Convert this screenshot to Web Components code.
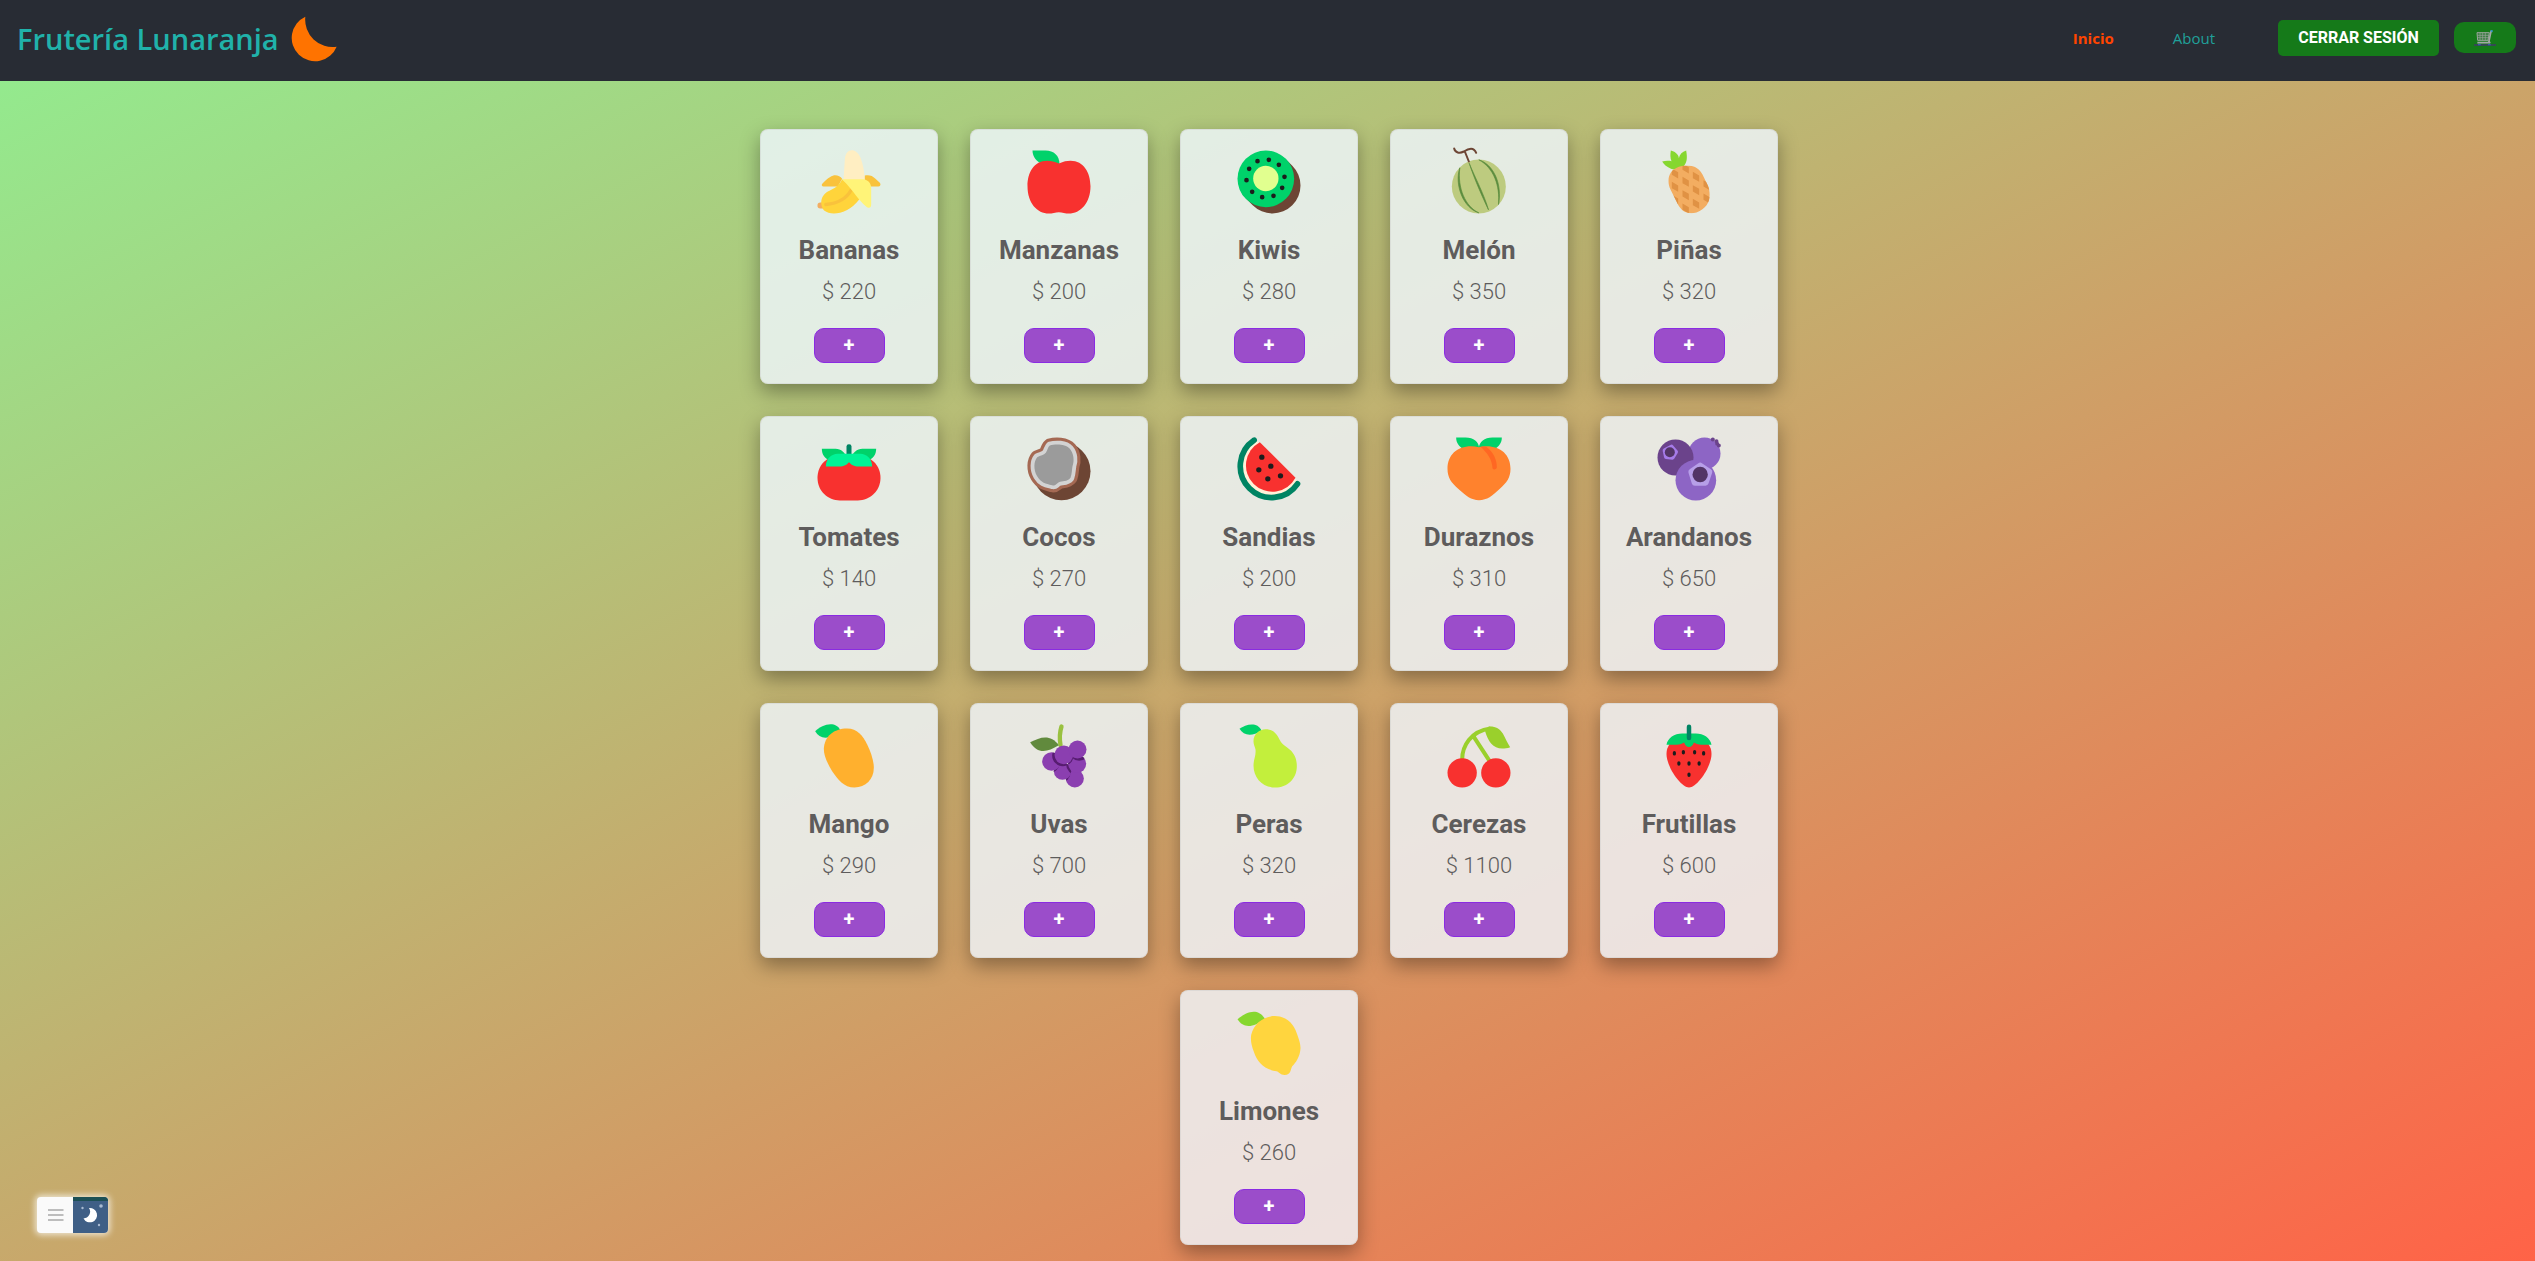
<!DOCTYPE html>
<html lang="es">
<head>
<meta charset="utf-8">
<meta name="viewport" content="width=device-width, initial-scale=1">
<title>Frutería Lunaranja</title>
<style>
html { min-height: 100%; background: linear-gradient(to bottom right, #90ee90, #ff6347); }
body { margin: 0; font-family: Roboto, sans-serif; }
</style>
</head>
<body>
<fruit-shop></fruit-shop>
<script>
const ICONS = {
  banana: ['187.5 79.5', `<rect x="201" y="249" width="26" height="18" rx="8" fill="#f3ad61"/><path d="M279 182L283 120C285 84 318 84 330 115C338 135 342 160 343 182Z" fill="#ffeec2"/><path d="M275 178L262 201H219C214 201 212 196 216 192C232 174 246 167 254 167C263 167 270 171 275 178ZM343 168C355 165 366 168 374 177L388 190C392 196 389 201 384 201H358L343 181Z" fill="#f9c23c"/><path d="M275 179C262 205 245 208 232 216C205 232 210 262 222 274C240 288 290 288 328 238L304 205Z" fill="#ffd43b"/><path d="M226 255C260 252 288 238 303 210" fill="none" stroke="#f9c23c" stroke-width="10" stroke-linecap="round"/><path d="M275 179H338C353 180 362 192 362 205V256C362 266 354 267 346 260C325 243 310 215 275 179Z" fill="#fff478"/>`],
  apple: ['817.5 79.5', `<path d="M846 93H885C910 93 927 108 927 135H880C858 128 846 112 846 93Z" fill="#00d26a"/><path d="M925 132C940 126 948 124 960 124C1000 124 1020 160 1020 200C1020 250 990 282 955 282C945 282 935 279 925 278C915 279 905 282 895 282C860 282 831 250 831 200C831 160 850 124 890 124C903 124 912 127 925 132Z" fill="#f8312f"/>`],
  kiwi: ['217.5 79.5', `<path d="M318 180L336 198" stroke="#6d4534" stroke-width="168" stroke-linecap="round"/><circle cx="316" cy="178" r="85" fill="#00d26a"/><circle cx="316" cy="177" r="38" fill="#e1ff8f"/><path d="M291 125h0M325 121h0M355 136h0M372 172h0M365 205h0M339 229h0M305 233h0M275 217h0M258 182h0M266 148h0" stroke="#1c1c1c" stroke-width="14" stroke-linecap="round"/>`],
  melon: ['847.5 79.5', `<circle cx="955" cy="201" r="81" fill="#bdcb7f"/><path d="M898 145C881 195 908 266 955 280C915 262 890 205 898 145ZM926 131C944 175 971 225 984 271C967 235 942 180 926 131ZM955 121C1000 135 1026 195 1014 255C1019 200 1000 145 955 121Z" fill="#5b8c3e" stroke="#5b8c3e" stroke-width="2"/><path d="M881 87C884 100 897 103 910 96C925 86 940 82 947 100M913 96L925 126" fill="none" stroke="#6d4534" stroke-width="6" stroke-linecap="round" stroke-linejoin="round"/>`],
  pineapple: ['247.5 79.5', `<path d="M301 93C320 98 325 110 325 116C328 104 335 97 347 93C351 115 350 130 338 142C325 153 310 152 300 147C288 142 280 135 275 126C285 123 295 123 303 125C299 115 299 105 301 93Z" fill="#86d72f"/><clipPath id="c"><path d="M350 138C375 138 388 150 396 165L412 198C425 230 417 265 378 279C350 286 332 275 321 252L300 210C288 185 292 154 325 142Q338 138 350 138Z"/></clipPath><g clip-path="url(#c)"><path d="M280 130h150v160h-150z" fill="#f3ad61"/><path d="M304 147l19 11v19l-19-11zM304 187l19 11v19l-19-11zM304 226l19 11v19l-19-11zM336 132l19 11v19l-19-11zM336 172l19 11v19l-19-11zM336 212l19 11v19l-19-11zM336 252l19 11v19l-19-11zM367 157l19 11v19l-19-11zM367 197l19 11v19l-19-11zM367 238l19 11v19l-19-11zM399 182l19 11v19l-19-11zM399 222l19 11v19l-19-11z" fill="#e09244"/></g>`],
  tomato: ['187.5 70.5', `<path d="M201 205C201 165 230 140 265 140H325C360 140 390 165 390 205C390 245 358 273 322 273H268C232 273 201 245 201 205Z" fill="#f8312f"/><path d="M214 118H255C272 118 285 130 288 145L240 155C222 147 214 135 214 118ZM377 118H336C319 118 306 130 303 145L351 155C369 147 377 135 377 118Z" fill="#00d26a"/><rect x="288" y="104" width="15" height="40" rx="7" fill="#008463"/><path d="M226 171C226 148 243 133 262 133H329C348 133 365 148 365 171H325C310 171 302 165 295.5 158C289 165 281 171 266 171Z" fill="#00f397"/>`],
  coconut: ['817.5 70.5', `<circle cx="933" cy="185" r="87" fill="#6d4534"/><g stroke-linejoin="round"><path d="M898 108C915 103 945 103 958 118C970 132 972 155 966 170C964 180 965 190 960 205C950 218 935 214 925 218C915 224 915 230 905 227C885 222 872 220 860 200C848 180 850 155 860 143C870 138 880 138 886 130C891 122 892 112 898 108Z" fill="none" stroke="#a56953" stroke-width="42"/><path d="M898 108C915 103 945 103 958 118C970 132 972 155 966 170C964 180 965 190 960 205C950 218 935 214 925 218C915 224 915 230 905 227C885 222 872 220 860 200C848 180 850 155 860 143C870 138 880 138 886 130C891 122 892 112 898 108Z" fill="#9b9b9b" stroke="#d3d3d3" stroke-width="23"/><path d="M898 108C915 103 945 103 958 118C970 132 972 155 966 170C964 180 965 190 960 205C950 218 935 214 925 218C915 224 915 230 905 227C885 222 872 220 860 200C848 180 850 155 860 143C870 138 880 138 886 130C891 122 892 112 898 108Z" fill="#9b9b9b"/></g>`],
  watermelon: ['217.5 70.5', `<path d="M291 97A86 86 0 1 0 407 212" fill="#fff2d9" stroke="#fff2d9" stroke-width="12"/><path d="M281 92A94 94 0 1 0 411 223" fill="none" stroke="#008463" stroke-width="17" stroke-linecap="round"/><path d="M298 98L405 205A79 79 0 1 1 298 98Z" fill="#f8312f"/><path d="M304 143h0M331 170h0M295 181h0M360 199h0M322 208h0" stroke="#1c1c1c" stroke-width="16" stroke-linecap="round"/>`],
  peach: ['847.5 70.5', `<path d="M887 84H915C940 84 955 98 956 115L910 120C895 110 887 100 887 84ZM1024 84H996C971 84 957 98 955 115L1001 120C1016 110 1024 100 1024 84Z" fill="#00d26a"/><path d="M955 113C1010 102 1050 130 1050 178C1050 205 1038 220 1018 238C995 260 980 272 955.5 272C932 272 917 260 893 238C873 220 861 205 861 178C861 130 900 102 955 113Z" fill="#ff822d"/><path d="M960 112Q968 110 977 112C998 126 1010 152 1009 174A7 7 0 0 1 996 176C995 150 980 130 960 112Z" fill="#ff6723"/>`],
  blueberry: ['247.5 70.5', `<circle cx="402" cy="132" r="48" fill="#8d65c5"/><path d="M427 90h0M438 95h0M440 103h0M445 108h0" stroke="#6b438b" stroke-width="12" stroke-linecap="round"/><circle cx="315" cy="144" r="54" fill="#6b438b"/><circle cx="376" cy="212" r="61" fill="#8d65c5"/><path d="M303 112L316 127L306 144L287 142L283 123Z" fill="#a67be8" stroke="#a67be8" stroke-width="13" stroke-linejoin="round"/><circle cx="298" cy="128" r="15" fill="#533566"/><path d="M389 169L416 187L405 219H373L363 187Z" fill="#b79fe8" stroke="#b79fe8" stroke-width="19" stroke-linejoin="round"/><circle cx="389" cy="195" r="23" fill="#533566"/>`],
  mango: ['187.5 61.5', `<path d="M194 95C215 75 255 62 270 93L250 108C225 120 205 115 194 95Z" fill="#00d26a"/><path d="M290 87C320 87 337 108 350 135C362 160 370 185 370 205C370 240 345 264 312 264C280 264 262 240 245 215C230 190 220 170 220 148C222 110 250 87 290 87Z" fill="#ffb02e"/>`],
  grapes: ['817.5 61.5', `<path d="M933 81C927 100 927 120 930 137" fill="none" stroke="#99c140" stroke-width="13" stroke-linecap="round"/><path d="M839 128C870 112 900 103 925 137C890 158 862 165 839 128Z" fill="#618a3d"/><clipPath id="a"><circle cx="903" cy="186" r="28"/></clipPath><clipPath id="b"><circle cx="936" cy="215" r="26"/></clipPath><clipPath id="c"><circle cx="980" cy="193" r="27"/></clipPath><clipPath id="d"><circle cx="973" cy="237" r="27"/></clipPath><g fill="#8b3fb0"><circle cx="973" cy="237" r="27"/><g clip-path="url(#d)"><circle cx="933" cy="220" r="27" fill="#571d70"/></g><circle cx="936" cy="215" r="26"/><g clip-path="url(#b)" fill="#571d70"><circle cx="899" cy="191" r="28"/><circle cx="978" cy="195" r="31"/></g><circle cx="903" cy="186" r="28"/><circle cx="980" cy="193" r="27"/><g fill="#571d70"><circle cx="937" cy="168" r="32" clip-path="url(#a)"/><circle cx="937" cy="168" r="32" clip-path="url(#b)"/><circle cx="937" cy="168" r="32" clip-path="url(#c)"/><circle cx="986" cy="155" r="29" clip-path="url(#c)"/></g><circle cx="940" cy="166" r="28"/><circle cx="981" cy="150" r="27"/></g>`],
  pear: ['217.5 61.5', `<path d="M237 88C255 75 290 65 303 93C275 112 250 110 237 88Z" fill="#00d26a"/><path d="M316 89C338 89 350 105 357 120C362 132 370 137 380 144C400 158 409 175 409 200C409 238 380 264 344 264C306 264 279 236 279 198C279 180 287 170 285 150C283 140 279 135 279 125C279 105 295 89 316 89Z" fill="#c3ef3c"/>`],
  cherry: ['847.5 61.5', `<path d="M905 180C905 140 930 95 990 87M940 112L987 184" fill="none" stroke="#9ad02c" stroke-width="12"/><path d="M974 96L985 81C1005 80 1018 88 1027 102C1035 116 1040 130 1049 143C1005 158 985 132 974 96Z" fill="#9ad02c"/><circle cx="905" cy="220" r="44" fill="#f8312f"/><circle cx="1006" cy="220" r="44" fill="#f8312f"/>`],
  strawberry: ['0 0', `<g transform="scale(6.75)"><path d="M16 7C22 7 26 10.5 26 15C26 21 19.5 30 16 30C12.5 30 6 21 6 15C6 10.5 10 7 16 7Z" fill="#f8312f"/><path d="M6 11C6.5 8 9.5 6 13 6H19C22.5 6 25.5 8 26 11H21.5C20 11 19 10.5 18.2 10C17.5 11.5 17 12 16 12C15 12 14.5 11.5 13.8 10C13 10.5 12 11 10.5 11Z" fill="#00d26a"/><rect x="15" y="2" width="2" height="7" rx="1" fill="#008463"/><path d="M9.5 14.5v.6M13.5 14v.6M18.5 14v.6M22.5 14.5v.6M11.5 19v.6M16 19v.6M20.500 19v.6M16 24v.6" stroke="#1c1c1c" stroke-width="1.4" stroke-linecap="round"/></g>`],
  lemon: ['217.5 81', `<path d="M231 118C255 98 290 80 313 116C280 142 250 148 231 118Z" fill="#86d72f"/><path d="M343 108C375 108 395 128 405 150C415 175 420 190 420 205C419 230 405 250 395 259C390 268 392 285 372 285C360 285 355 276 348 274C310 268 290 245 280 215C272 195 270 180 272 165C280 130 310 108 343 108Z" fill="#ffd53e"/>`]
};

const PRODUCTS = [
  ['Bananas', 220, 'banana'], ['Manzanas', 200, 'apple'], ['Kiwis', 280, 'kiwi'], ['Melón', 350, 'melon'], ['Piñas', 320, 'pineapple'],
  ['Tomates', 140, 'tomato'], ['Cocos', 270, 'coconut'], ['Sandias', 200, 'watermelon'], ['Duraznos', 310, 'peach'], ['Arandanos', 650, 'blueberry'],
  ['Mango', 290, 'mango'], ['Uvas', 700, 'grapes'], ['Peras', 320, 'pear'], ['Cerezas', 1100, 'cherry'], ['Frutillas', 600, 'strawberry'],
  ['Limones', 260, 'lemon']
];

class FruitIcon extends HTMLElement {
  constructor() { super(); this.attachShadow({ mode: 'open' }); }
  connectedCallback() {
    const [origin, art] = ICONS[this.getAttribute('name')];
    this.shadowRoot.innerHTML = `<style>:host{display:block;width:72px;height:72px}svg{display:block;width:100%;height:100%}</style>
      <svg viewBox="${origin} 216 216" aria-hidden="true">${art}</svg>`;
  }
}
customElements.define('fruit-icon', FruitIcon);

class ProductCard extends HTMLElement {
  constructor() {
    super();
    this.attachShadow({ mode: 'open' }).innerHTML = `<style>
      :host { box-sizing: border-box; display: flex; flex-direction: column; align-items: center; width: 178px; padding: 16px 8px 20px;
        border: 1px solid rgba(200,200,200,.4); border-radius: 8px; background: rgba(240,248,255,.8);
        box-shadow: 0 8px 20px rgba(0,0,0,.35); color: #5e5c5c; }
      h2, p { margin: 0; }
      h2 { margin-top: 12px; font-size: 26px; line-height: 40px; font-weight: 700; }
      p { margin-top: 6px; font-size: 22px; line-height: 32px; font-weight: 300; }
      button { width: 71px; height: 35px; margin-top: 20px; padding: 0; border: 1px solid #8a2be2; border-radius: 10px;
        background: #9b4dca; color: #fff; font: 700 20px/33px Roboto, sans-serif; cursor: pointer; }
    </style>
    <slot name="icon"></slot><h2><slot name="name"></slot></h2><p><slot name="price"></slot></p>
    <button type="button">+</button>`;
  }
}
customElements.define('product-card', ProductCard);

class ShopNav extends HTMLElement {
  constructor() {
    super();
    this.attachShadow({ mode: 'open' }).innerHTML = `<style>
      :host { display: block; background: #282c34; }
      nav { display: flex; align-items: center; justify-content: space-between; height: 81px; padding: 0 19px 4px 17px; box-sizing: border-box; font-family: "Open Sans", sans-serif; }
      .brand { display: flex; align-items: center; gap: 12px; color: #20b2aa; font-size: 29px; line-height: 42px; font-weight: 600; text-decoration: none; }
      .brand svg { width: 46px; height: 46px; }
      .side { display: flex; align-items: center; padding-bottom: 2px; }
      .link { color: #20a09a; font-size: 15px; line-height: 24px; text-decoration: none; margin-right: 59px; }
      .link.about { margin-right: 63px; }
      .link.on { color: #ff4500; font-weight: 700; }
      button { height: 36px; width: 161px; padding: 0; border: 0; border-radius: 5px; background: #157a19; color: #fff; font: 700 16px/36px Roboto, sans-serif; cursor: pointer; }
      .cart { display: flex; align-items: center; justify-content: center; width: 62px; height: 31px; margin-left: 15px; border-radius: 10px; background: #157a19; }
      .cart svg { width: 22px; height: 16px; }
    </style>
    <nav>
      <a class="brand" href="#">Frutería Lunaranja
        <svg viewBox="868 46 138 138" aria-hidden="true"><path d="M911 48A70 70 0 1 0 1005 138A82 82 0 0 1 911 48Z" fill="#ff7300"/></svg></a>
      <div class="side">
        <a class="link on" href="#">Inicio</a><a class="link about" href="#about">About</a>
        <button type="button">CERRAR SESIÓN</button>
        <a class="cart" href="#cart" aria-label="Carrito">
          <svg viewBox="0 0 66 48"><path d="M9 8H46L42 31H11Z" fill="#3b7d43" stroke="#9aa59b" stroke-width="3"/><path d="M10 16H45M10 23H43M18 8V31M26 8V31M34 8V31" stroke="#9aa59b" stroke-width="2"/><path d="M55 4H51L44 38H10M44 31L48 40" fill="none" stroke="#a3a8a6" stroke-width="5"/><path d="M50 3h6M12 44h8M42 44h8" stroke="#2196d8" stroke-width="4"/><path d="M0 45H66" stroke="#551a8b" stroke-width="3"/></svg></a>
      </div>
    </nav>`;
  }
}
customElements.define('shop-nav', ShopNav);

class ThemeToggle extends HTMLElement {
  constructor() {
    super();
    this.attachShadow({ mode: 'open' }).innerHTML = `<style>
      :host { position: fixed; left: 37px; bottom: 28px; display: flex; border-radius: 4px; overflow: hidden; box-shadow: 0 0 6px 2px rgba(255,255,255,.7); background: #fafafa; }
      button { width: 36px; height: 36px; padding: 0; border: 0; background: none; }
      button + button { width: 35px; background: #3f5f86; border-top: 4px solid #1d5055; }
      svg { display: block; width: 100%; height: 100%; }
    </style>
    <button type="button" aria-label="Menú"><svg viewBox="0 0 36 36"><path d="M11 13H26.5M11 18H26.5M11 23H26.5" stroke="#bdbdbd" stroke-width="2"/></svg></button>
    <button type="button" aria-label="Modo oscuro"><svg viewBox="0 0 35 32"><path d="M16 7A7.2 7.2 0 1 1 10.5 17.5A6.8 6.8 0 0 0 16 7Z" fill="#fff"/><g fill="#a9bbd2"><circle cx="28" cy="5" r="1.8"/><circle cx="9.5" cy="7" r="1.2"/><circle cx="26" cy="24" r="1.2"/></g></svg></button>`;
  }
}
customElements.define('theme-toggle', ThemeToggle);

class FruitShop extends HTMLElement {
  constructor() {
    super();
    this.attachShadow({ mode: 'open' }).innerHTML = `<style>
      :host { display: block; }
      main { display: flex; flex-wrap: wrap; justify-content: center; gap: 32px; max-width: 1020px; margin: 0 auto; padding: 48px 16px 16px 19px; }
    </style>
    <shop-nav></shop-nav>
    <main>${PRODUCTS.map(([name, price, icon]) => `<product-card><fruit-icon slot="icon" name="${icon}"></fruit-icon><span slot="name">${name}</span><span slot="price">$ ${price}</span></product-card>`).join('')}</main>
    <theme-toggle></theme-toggle>`;
  }
}
customElements.define('fruit-shop', FruitShop);
</script>
</body>
</html>
